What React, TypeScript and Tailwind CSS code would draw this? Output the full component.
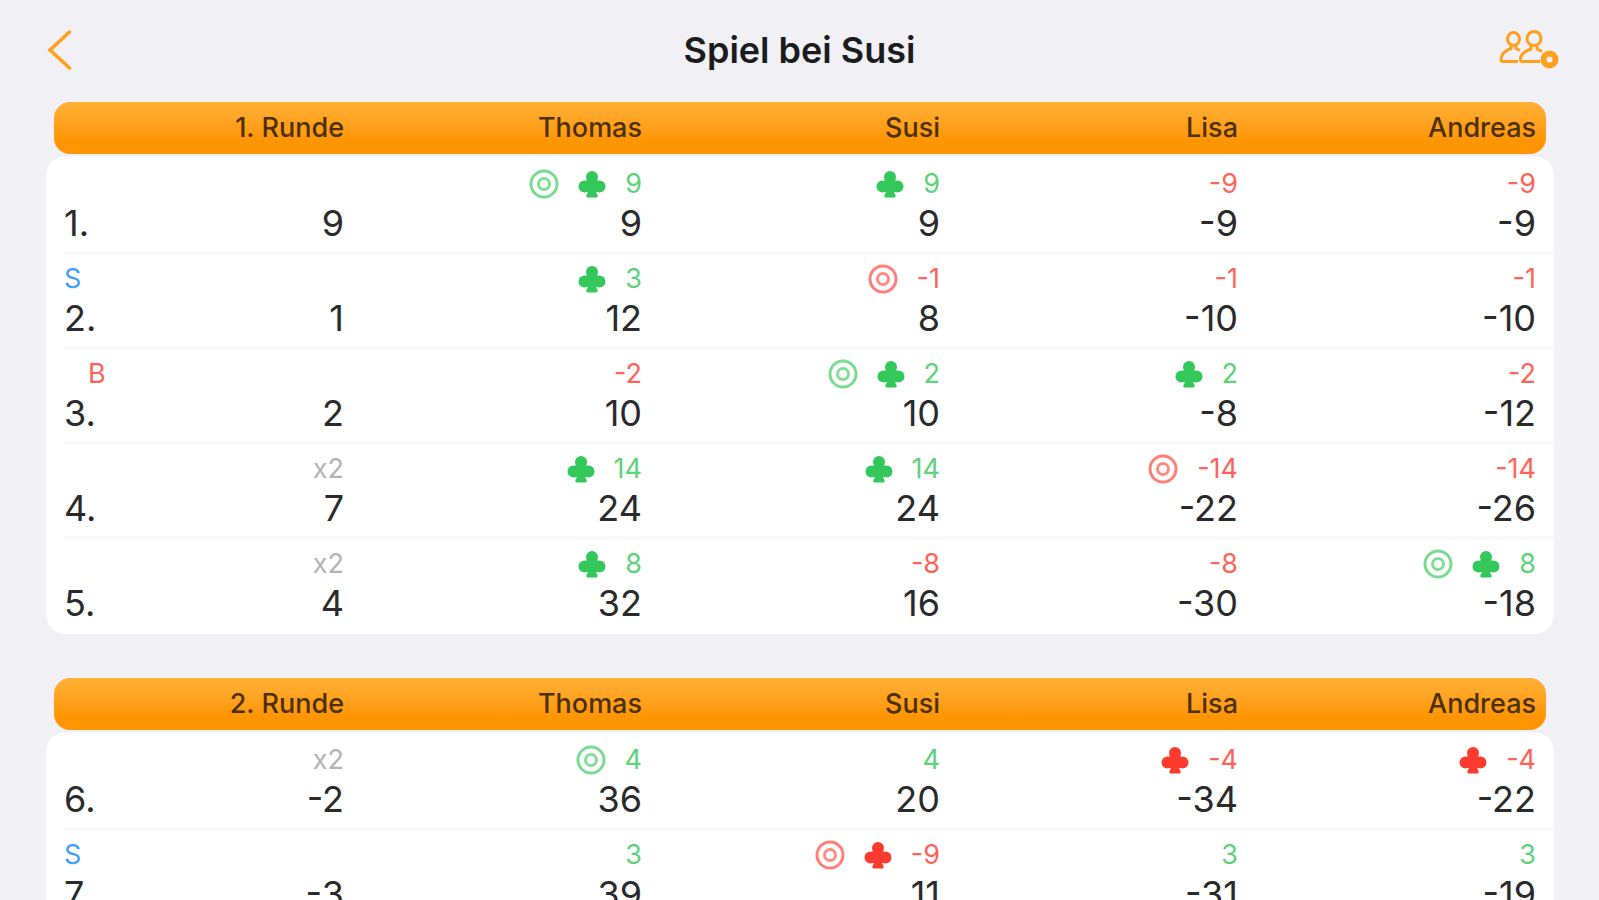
type Score = {
    points: number;
    total: number;
    club?: boolean;
    ring?: boolean;
};

type Game = {
    nr: number;
    value: number;
    solo?: boolean;
    bock?: boolean;
    double?: boolean;
    scores: Score[];
};

type Round = {
    name: string;
    games: Game[];
};

const players = ["Thomas", "Susi", "Lisa", "Andreas"];

const rounds: Round[] = [
    {
        name: "1. Runde",
        games: [
            {
                nr: 1, value: 9,
                scores: [
                    { points: 9, total: 9, club: true, ring: true },
                    { points: 9, total: 9, club: true },
                    { points: -9, total: -9 },
                    { points: -9, total: -9 },
                ],
            },
            {
                nr: 2, value: 1, solo: true,
                scores: [
                    { points: 3, total: 12, club: true },
                    { points: -1, total: 8, ring: true },
                    { points: -1, total: -10 },
                    { points: -1, total: -10 },
                ],
            },
            {
                nr: 3, value: 2, bock: true,
                scores: [
                    { points: -2, total: 10 },
                    { points: 2, total: 10, club: true, ring: true },
                    { points: 2, total: -8, club: true },
                    { points: -2, total: -12 },
                ],
            },
            {
                nr: 4, value: 7, double: true,
                scores: [
                    { points: 14, total: 24, club: true },
                    { points: 14, total: 24, club: true },
                    { points: -14, total: -22, ring: true },
                    { points: -14, total: -26 },
                ],
            },
            {
                nr: 5, value: 4, double: true,
                scores: [
                    { points: 8, total: 32, club: true },
                    { points: -8, total: 16 },
                    { points: -8, total: -30 },
                    { points: 8, total: -18, club: true, ring: true },
                ],
            },
        ],
    },
    {
        name: "2. Runde",
        games: [
            {
                nr: 6, value: -2, double: true,
                scores: [
                    { points: 4, total: 36, ring: true },
                    { points: 4, total: 20 },
                    { points: -4, total: -34, club: true },
                    { points: -4, total: -22, club: true },
                ],
            },
            {
                nr: 7, value: -3, solo: true,
                scores: [
                    { points: 3, total: 39 },
                    { points: -9, total: 11, club: true, ring: true },
                    { points: 3, total: -31 },
                    { points: 3, total: -19 },
                ],
            },
        ],
    },
];

function ClubIcon() {
    return (
        <svg viewBox="0 0 28 28" className="size-7" fill="currentColor" aria-hidden="true">
            <circle cx="14" cy="7" r="6" />
            <circle cx="6.500" cy="16.500" r="6" />
            <circle cx="21.500" cy="16.500" r="6" />
            <path d="M9 9h10l2 5v8h-3l1.500 3c.6 1.300 0 2.500-1.500 2.500h-8c-1.500 0-2.100-1.200-1.500-2.500L10 22H7v-8l2-5z" />
        </svg>
    );
}

function RingIcon() {
    return (
        <svg viewBox="0 0 30 30" className="size-[30px]" fill="none" stroke="currentColor" aria-hidden="true">
            <circle cx="15" cy="15" r="13" strokeWidth="3" opacity="0.650" />
            <circle cx="15" cy="15" r="5.500" strokeWidth="3" opacity="0.600" />
        </svg>
    );
}

function PlayersIcon() {
    return (
        <svg viewBox="0 0 60 42" className="h-[42px] w-[60px]" fill="none" stroke="currentColor" strokeWidth="3" strokeLinejoin="round" aria-hidden="true">
            <ellipse cx="14.500" cy="10" rx="6" ry="6.500" />
            <path d="M12 16.500v3C5 22 2 25.500 2 30.500c0 1.500.7 2 2 2h15M17 16.500v3l4 2" />
            <ellipse cx="35" cy="9.500" rx="7" ry="7" />
            <path d="M32 16.500v3.500C25 22.500 21.500 26 21.500 30.500c0 1.500.7 2 2 2H41M38 16.500v3.500l5 2.500" />
            <circle cx="50.500" cy="30.500" r="6" strokeWidth="6" />
        </svg>
    );
}

function ScoreCell({ score }: { score: Score }) {
    const positive = score.points > 0;

    return (
        <td className="col-span-2 pr-[18px] text-right">
            <div className={`flex h-8 items-center justify-end gap-[19px] text-[27px] ${positive ? "text-[#34c759]" : "text-[#ff3b30]"}`}>
                {score.ring && <RingIcon />}
                {score.club && <ClubIcon />}
                <span className="opacity-80">{score.points}</span>
            </div>
            <div className="text-4xl leading-[46px]">{score.total}</div>
        </td>
    );
}

function GameRow({ game }: { game: Game }) {
    return (
        <tr className="grid h-[95px] grid-cols-10 border-t-4 border-[#f8f8f9] pt-2 first:border-transparent last:h-[98px]">
            <th scope="row" className="text-left font-normal">
                <div className="flex h-8 items-center text-[27px]">
                    <span className="w-6 text-[#409cff]">{game.solo && "S"}</span>
                    <span className="text-[#ff6259]">{game.bock && "B"}</span>
                </div>
                <div className="text-4xl leading-[46px]">{game.nr}.</div>
            </th>
            <td className="pr-[18px] text-right">
                <div className="h-8 text-[27px] leading-8 text-[#b4b4b6]">{game.double && "x2"}</div>
                <div className="text-4xl leading-[46px]">{game.value}</div>
            </td>
            {game.scores.map((score, i) => (
                <ScoreCell key={players[i]} score={score} />
            ))}
        </tr>
    );
}

function RoundTable({ round }: { round: Round }) {
    return (
        <table className="block">
            <thead className="mx-2 block rounded-2xl bg-linear-to-b from-[#ffb033] to-[#ff9500] to-75% pl-[10px]">
                <tr className="-mr-2 grid h-[52px] grid-cols-5 items-center text-[27px] text-[#4d3000]">
                    <th scope="col" className="pr-[18px] text-right font-medium">{round.name}</th>
                    {players.map((player) => (
                        <th key={player} scope="col" className="pr-[18px] text-right font-medium">{player}</th>
                    ))}
                </tr>
            </thead>
            <tbody className="mt-[2px] block rounded-[20px] bg-white pl-[18px]">
                {round.games.map((game) => (
                    <GameRow key={game.nr} game={game} />
                ))}
            </tbody>
        </table>
    );
}

export default function App() {
    return (
        <div className="h-screen overflow-hidden bg-[#f0f0f5] font-['Inter','Liberation_Sans',sans-serif] text-[#2a2a2c]">
            <header className="grid h-[102px] grid-cols-[1fr_auto_1fr] items-center px-10 pb-[2px] text-[#ff9f1c]">
                <button type="button" aria-label="Zurück" className="ml-[6px] justify-self-start">
                    <svg viewBox="0 0 26 42" className="h-[42px] w-[26px]" fill="none" stroke="currentColor" strokeWidth="3.500" strokeLinecap="round" aria-hidden="true">
                        <path d="M23.500 3 4 21l19.500 18" />
                    </svg>
                </button>
                <h1 className="text-4xl font-semibold text-[#1c1c1e]">Spiel bei Susi</h1>
                <button type="button" aria-label="Spieler verwalten" className="justify-self-end">
                    <PlayersIcon />
                </button>
            </header>
            <main className="flex flex-col gap-11 pl-[46px] pr-[45px]">
                {rounds.map((round) => (
                    <RoundTable key={round.name} round={round} />
                ))}
            </main>
        </div>
    );
}
